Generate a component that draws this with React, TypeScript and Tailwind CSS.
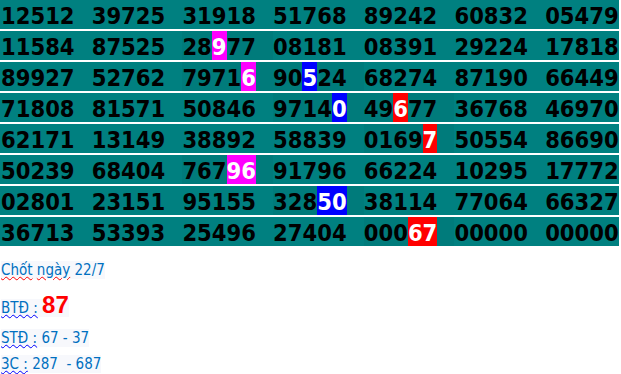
type Part = { t: string; hl?: "pink" | "blue" | "red" };
type Cell = Part[];

const hlClass: Record<string, string> = {
  pink: "bg-[#ff00ff]",
  blue: "bg-[#0000ff]",
  red: "bg-[#ff0000]",
};

// each cell is a 5 digit number, some digits highlighted
const rows: Cell[][] = [
  ["12512", "39725", "31918", "51768", "89242", "60832", "05479"].map((t) => [{ t }]),
  [[{ t: "11584" }], [{ t: "87525" }], [{ t: "28" }, { t: "9", hl: "pink" }, { t: "77" }], [{ t: "08181" }], [{ t: "08391" }], [{ t: "29224" }], [{ t: "17818" }]],
  [[{ t: "89927" }], [{ t: "52762" }], [{ t: "7971" }, { t: "6", hl: "pink" }], [{ t: "90" }, { t: "5", hl: "blue" }, { t: "24" }], [{ t: "68274" }], [{ t: "87190" }], [{ t: "66449" }]],
  [[{ t: "71808" }], [{ t: "81571" }], [{ t: "50846" }], [{ t: "9714" }, { t: "0", hl: "blue" }], [{ t: "49" }, { t: "6", hl: "red" }, { t: "77" }], [{ t: "36768" }], [{ t: "46970" }]],
  [[{ t: "62171" }], [{ t: "13149" }], [{ t: "38892" }], [{ t: "58839" }], [{ t: "0169" }, { t: "7", hl: "red" }], [{ t: "50554" }], [{ t: "86690" }]],
  [[{ t: "50239" }], [{ t: "68404" }], [{ t: "767" }, { t: "96", hl: "pink" }], [{ t: "91796" }], [{ t: "66224" }], [{ t: "10295" }], [{ t: "17772" }]],
  [[{ t: "02801" }], [{ t: "23151" }], [{ t: "95155" }], [{ t: "328" }, { t: "50", hl: "blue" }], [{ t: "38114" }], [{ t: "77064" }], [{ t: "66327" }]],
  [[{ t: "36713" }], [{ t: "53393" }], [{ t: "25496" }], [{ t: "27404" }], [{ t: "000" }, { t: "67", hl: "red" }], [{ t: "00000" }], [{ t: "00000" }]],
];

function NumCell({ cell, last }: { cell: Cell; last: boolean }) {
  const marked = cell.some((p) => p.hl);
  return (
    <div
      className={`${last ? "flex-1" : "w-[90.7px] shrink-0"} h-[29px] whitespace-nowrap leading-[32px] ${
        marked ? "bg-[#007b7b]" : ""
      }`}
    >
      {cell.map((p, i) =>
        p.hl ? (
          <span key={i} className={`inline-block h-[29px] align-baseline text-white ${hlClass[p.hl]}`}>
            {p.t}
          </span>
        ) : (
          <span key={i}>{p.t}</span>
        )
      )}
    </div>
  );
}

const wavyRed = "underline decoration-wavy decoration-[#ff0000] decoration-1 underline-offset-1";
const wavyBlue = "underline decoration-wavy decoration-[#0000ff] decoration-1 underline-offset-1";

export default function App() {
  return (
    <div className="w-[621px] h-[374px] overflow-hidden bg-white">
      <div className="w-[619px] flex flex-col gap-[2px] font-['DejaVu_Sans_Condensed','DejaVu_Sans',sans-serif] font-bold text-[23.5px] text-black">
        {rows.map((row, r) => (
          <div key={r} className="flex h-[29px] overflow-hidden bg-[#008080] pl-[1px]">
            {row.map((cell, c) => (
              <NumCell key={c} cell={cell} last={c === row.length - 1} />
            ))}
          </div>
        ))}
      </div>

      <div className="pl-[1px] font-['DejaVu_Sans_Condensed','DejaVu_Sans',sans-serif] text-[15px] text-[#0070c0]">
        <div className="mt-[14px] leading-[20px]">
          <span className="bg-[#f7f8fc]">
            <span className={wavyRed}>Chốt</span> <span className={wavyRed}>ngày</span> 22/7
          </span>
        </div>
        <div className="mt-[11px] leading-[28px]">
          <span className="bg-[#f7f8fc]">
            <span className={wavyBlue}>BTĐ :</span>{" "}
            <span className="font-['Liberation_Sans',Arial,sans-serif] font-bold text-[24px] text-[#ff0000]">87</span>
          </span>
        </div>
        <div className="mt-[6px] leading-[20px]">
          <span className="bg-[#f7f8fc]">
            <span className={wavyBlue}>STĐ :</span> 67 - 37
          </span>
        </div>
        <div className="mt-[6px] leading-[20px]">
          <span className="bg-[#f7f8fc] whitespace-pre">
            <span className={wavyBlue}>3C :</span> 287  - 687
          </span>
        </div>
      </div>
    </div>
  );
}
